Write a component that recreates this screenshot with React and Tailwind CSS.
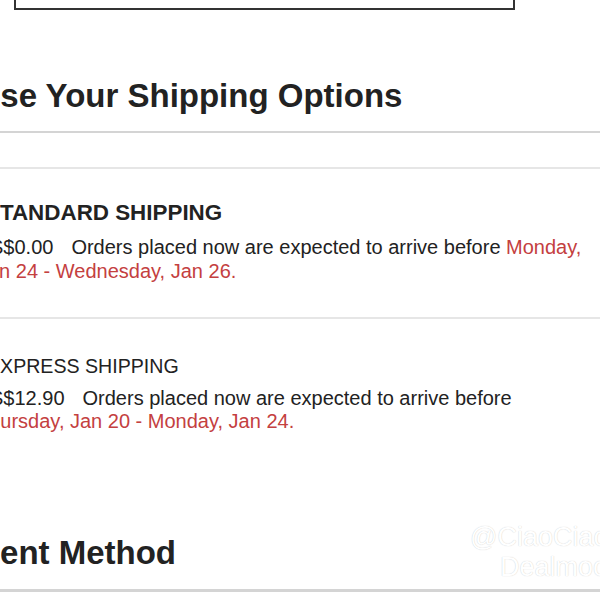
export default function App() {
  return (
    <div className="relative w-[600px] h-[600px] overflow-hidden bg-white text-[#222] [font-family:'Liberation_Sans',Arial,sans-serif]">
      <div className="ml-[14px] w-[501px] h-[10px] border-x-2 border-b-2 border-[#333]" />
      <h2 className="mt-[66px] -ml-[84px] text-[33px] leading-[40px] font-bold whitespace-nowrap">
        Choose Your Shipping Options
      </h2>
      <div className="mt-[15px] h-[2px] bg-[#d4d4d4]" />
      <div className="mt-[34px] h-[2px] bg-[#e6e6e6]" />
      <div className="-ml-[10px] pt-[31px] pb-[34px]">
        <div className="-ml-[5px] text-[22.4px] leading-[26px] font-bold whitespace-nowrap">STANDARD SHIPPING</div>
        <p className="mt-[9px] -ml-[12px] indent-[12px] text-[20px] leading-[24px] w-[612px]">
          <span className="mr-[18px]">S$0.00</span>Orders placed now are expected to arrive before{" "}
          <span className="text-[#c4403f]">Monday, Jan 24 - Wednesday, Jan 26.</span>
        </p>
      </div>
      <div className="h-[2px] bg-[#e6e6e6]" />
      <div className="-ml-[10px] pt-[34px]">
        <div className="-ml-[3px] text-[19.6px] leading-[26px] whitespace-nowrap">EXPRESS SHIPPING</div>
        <p className="mt-[8px] -ml-[13px] indent-[13px] text-[20px] leading-[23px] w-[612px]">
          <span className="mr-[18px]">S$12.90</span>Orders placed now are expected to arrive before{" "}
          <span className="text-[#c4403f]">Thursday, Jan 20 - Monday, Jan 24.</span>
        </p>
      </div>
      <h2 className="mt-[100px] -ml-[88px] text-[33px] leading-[40px] font-bold whitespace-nowrap">
        Payment Method
      </h2>
      <div className="mt-[16px] h-[3px] bg-[#d4d4d4]" />
      <div className="absolute left-[470px] top-[522px] text-[27px] leading-[30px] font-light text-white [text-shadow:0_0_1px_#c4c4c4] whitespace-nowrap">
        <div>@CiaoCiao</div>
        <div className="pl-[30px]">Dealmoo</div>
      </div>
    </div>
  );
}
